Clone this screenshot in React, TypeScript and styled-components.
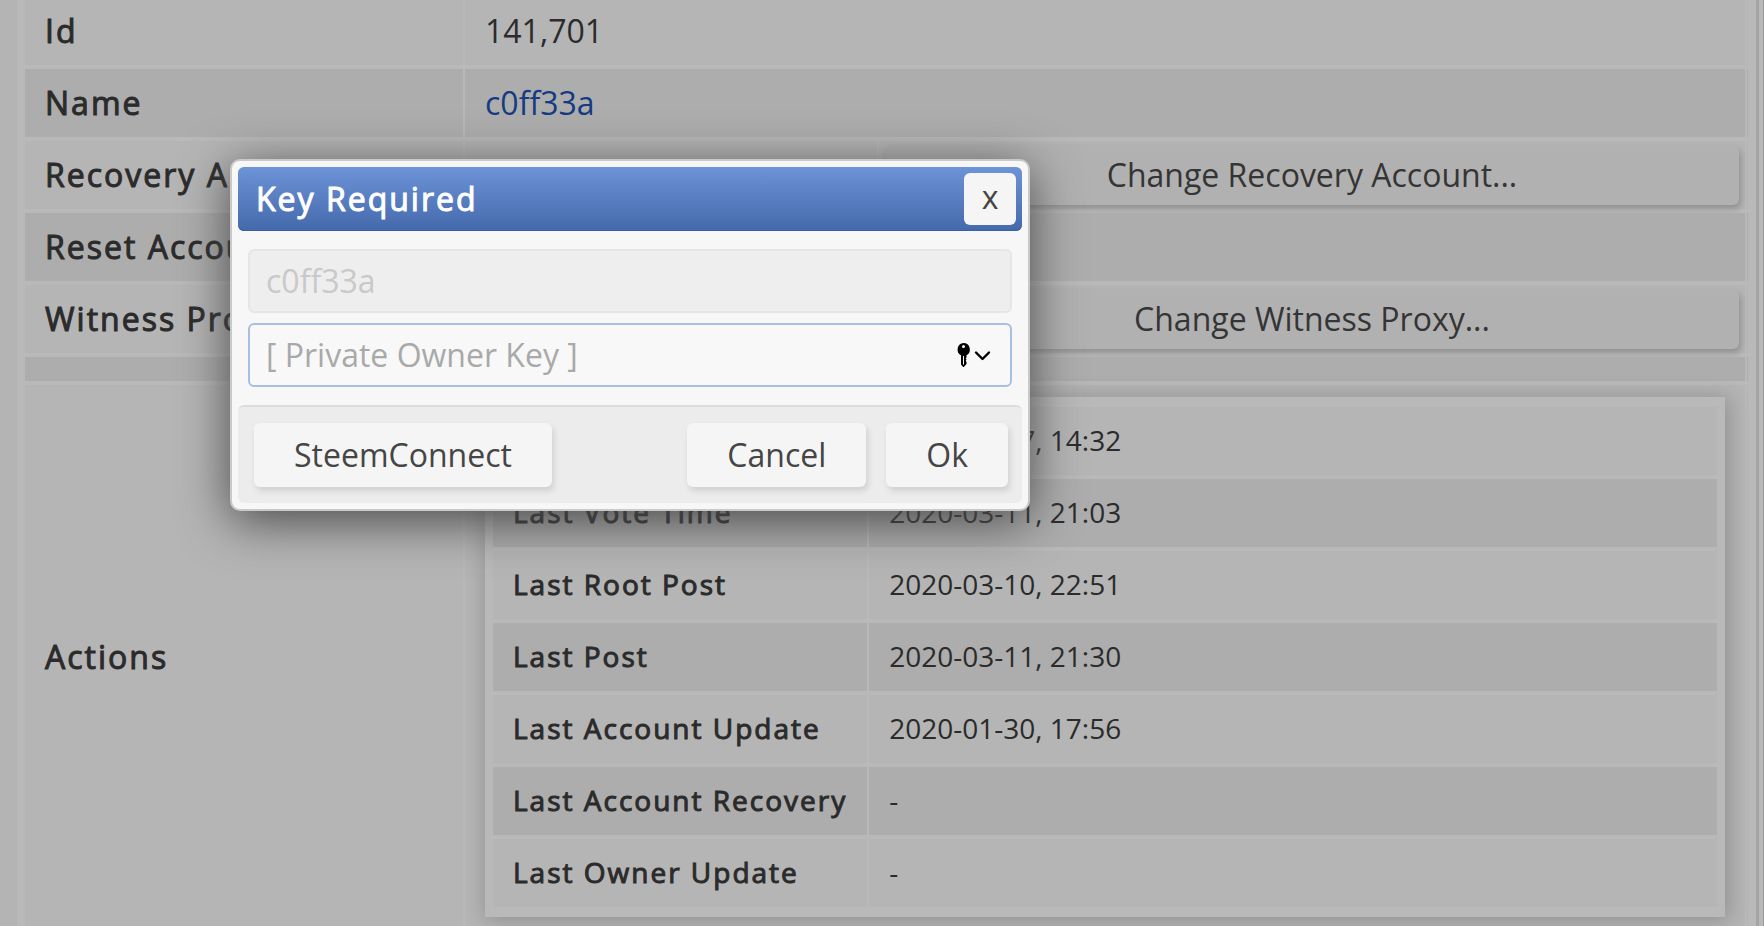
import React, { useState } from "react";
import styled, { createGlobalStyle } from "styled-components";

const GlobalStyle = createGlobalStyle`
  * {
    box-sizing: border-box;
  }
  body {
    margin: 0;
    background: #b4b4b4;
    color: #2b2b2b;
    font-family: "Open Sans", "Noto Sans", sans-serif;
    font-size: 32px;
    line-height: 44px;
  }
  button,
  input {
    font: inherit;
  }
`;

const Page = styled.div`
  display: flex;
  height: 100vh;
  padding-left: 17px;
  overflow: hidden;
`;

const Content = styled.main`
  flex: 1;
  min-width: 0;
  padding: 0 6px;
  background: #b9b9b9;
  border-right: 3px solid #a5a5a5;
`;

const Gutter = styled.div`
  width: 5px;
  background: #b8b8b8;
  border-right: 1px solid #999;
`;

const Table = styled.table`
  width: 100%;
  border-collapse: separate;
  border-spacing: 2px 4px;
`;

const AccountTable = styled(Table)`
  margin-top: -7px;
  table-layout: fixed;
`;

const Row = styled.tr<{ $thin?: boolean }>`
  height: ${(p) => (p.$thin ? 24 : 68)}px;
  background: #b5b5b5;

  &:nth-child(even) {
    background: #adadad;
  }
`;

const Label = styled.th`
  padding: 0 20px;
  font-weight: 400;
  letter-spacing: 2px;
  -webkit-text-stroke: 1px currentColor;
  text-align: left;
  white-space: nowrap;
`;

const ActionLabel = styled(Label)`
  width: 374px;
`;

const Value = styled.td`
  padding: 0 20px;
`;

const Edge = styled.td`
  padding: 0;
`;

const ButtonCell = styled.td`
  padding: 4px 6px;
`;

const CardCell = styled.td`
  padding: 12px 20px;
`;

const Card = styled.div`
  padding: 6px;
  background: #b9b9b9;
  box-shadow: 2px 2px 20px 2px rgba(0, 0, 0, 0.2);
  font-size: 28px;
  line-height: 42px;

  th,
  td {
    padding-bottom: 2px;
  }
`;

const Link = styled.a`
  color: #153b82;
  text-decoration: none;
`;

const RowButton = styled.button`
  display: block;
  width: 100%;
  height: 60px;
  padding: 0;
  border: 0;
  border-radius: 6px;
  background: #b1b1b1;
  color: #353535;
  box-shadow: 2px 4px 6px rgba(0, 0, 0, 0.2);
`;

const Dialog = styled.div`
  position: absolute;
  top: 159px;
  left: 230px;
  width: 800px;
  padding: 6px;
  border: 2px solid #c9c9c9;
  border-radius: 10px;
  background: #f7f7f7;
  box-shadow: 0 10px 50px #484848;
`;

const TitleBar = styled.header`
  display: flex;
  align-items: center;
  justify-content: space-between;
  height: 64px;
  padding: 0 6px 0 18px;
  border-radius: 6px;
  background: linear-gradient(#6d93d8, #4469ab);
  box-shadow: inset 0 -1px #3a5fa5;
`;

const Title = styled.h1`
  margin: 0;
  color: #fff;
  font-size: 32px;
  font-weight: 400;
  letter-spacing: 2px;
  -webkit-text-stroke: 1px currentColor;
`;

const CloseButton = styled.button`
  width: 52px;
  height: 52px;
  padding: 0 0 4px;
  border: 0;
  border-radius: 6px;
  background: #f5f5f5;
  color: #454545;
  font-size: 32px;
`;

const Fields = styled.div`
  display: grid;
  gap: 10px;
  padding: 18px 10px;
`;

const Field = styled.div`
  position: relative;
`;

const TextInput = styled.input`
  display: block;
  width: 100%;
  height: 64px;
  padding: 0 16px 2px;
  border: 2px solid #a5c0e0;
  border-radius: 6px;
  outline: 0;
  background: #f8f8f8;
  color: #454545;

  &::placeholder {
    color: #a9a9a9;
    opacity: 1;
  }
  &:disabled {
    border-color: #e6e6e6;
    background: #eee;
    color: #c9c9c9;
  }
`;

const KeyMenu = styled.button`
  position: absolute;
  top: 18px;
  right: 20px;
  display: flex;
  width: 36px;
  height: 28px;
  padding: 0;
  border: 0;
  background: transparent;
`;

const Footer = styled.footer`
  display: flex;
  gap: 20px;
  padding: 16px 14px 16px 16px;
  border-top: 2px solid #dcdcdc;
  border-radius: 6px;
  background: #ececec;
`;

const DialogButton = styled.button<{ $lead?: boolean }>`
  height: 64px;
  margin-right: ${(p) => (p.$lead ? "auto" : "0")};
  padding: 0 40px;
  border: 0;
  border-radius: 6px;
  background: #f5f5f5;
  color: #454545;
  box-shadow: 2px 4px 6px rgba(0, 0, 0, 0.12);
`;

const actions = [
  ["Last Claim Time", "2020-03-07, 14:32"],
  ["Last Vote Time", "2020-03-11, 21:03"],
  ["Last Root Post", "2020-03-10, 22:51"],
  ["Last Post", "2020-03-11, 21:30"],
  ["Last Account Update", "2020-01-30, 17:56"],
  ["Last Account Recovery", "-"],
  ["Last Owner Update", "-"],
];

function KeyIcon() {
  return (
    <svg width="36" height="28" viewBox="0 0 36 28" aria-hidden="true">
      <path
        fillRule="evenodd"
        d="M7.5 2a6.5 6.5 0 0 1 3 12.200v2.300l-.8 1 .8 1-.8 1.200.8 1.200v2L7.800 26h-.6L5 23.500v-9.300A6.500 6.500 0 0 1 7.500 2zM7.500 4a1.500 1.500 0 1 0 0 3 1.500 1.500 0 0 0 0-3zM7 15v8.500h1V15z"
      />
      <path
        d="M20 11.500l6.500 6.500 6.500-6.500"
        fill="none"
        stroke="#000"
        strokeWidth="2.400"
        strokeLinecap="round"
        strokeLinejoin="round"
      />
    </svg>
  );
}

function KeyDialog() {
  const [key, setKey] = useState("");
  return (
    <Dialog role="dialog" aria-labelledby="key-title">
      <TitleBar>
        <Title id="key-title">Key Required</Title>
        <CloseButton type="button" aria-label="Close">
          x
        </CloseButton>
      </TitleBar>
      <Fields>
        <TextInput aria-label="Account" defaultValue="c0ff33a" disabled />
        <Field>
          <TextInput
            type="password"
            aria-label="Private owner key"
            placeholder="[ Private Owner Key ]"
            value={key}
            onChange={(e) => setKey(e.target.value)}
          />
          <KeyMenu type="button" aria-label="Saved passwords">
            <KeyIcon />
          </KeyMenu>
        </Field>
      </Fields>
      <Footer>
        <DialogButton type="button" $lead>
          SteemConnect
        </DialogButton>
        <DialogButton type="button">Cancel</DialogButton>
        <DialogButton type="button">Ok</DialogButton>
      </Footer>
    </Dialog>
  );
}

const Col = styled.col<{ $width?: number }>`
  width: ${(p) => (p.$width ? `${p.$width}px` : "auto")};
`;

export default function App() {
  return (
    <>
      <GlobalStyle />
      <Page>
        <Content>
          <AccountTable>
            <colgroup>
              <Col $width={438} />
              <Col $width={412} />
              <Col />
              <Col $width={1} />
            </colgroup>
            <tbody>
              <Row>
                <Label scope="row">Id</Label>
                <Value colSpan={2}>141,701</Value>
                <Edge />
              </Row>
              <Row>
                <Label scope="row">Name</Label>
                <Value colSpan={2}>
                  <Link href="#c0ff33a">c0ff33a</Link>
                </Value>
                <Edge />
              </Row>
              <Row>
                <Label scope="row">Recovery Account</Label>
                <Value />
                <ButtonCell>
                  <RowButton type="button">Change Recovery Account...</RowButton>
                </ButtonCell>
                <Edge />
              </Row>
              <Row>
                <Label scope="row">Reset Account</Label>
                <Value colSpan={2} />
                <Edge />
              </Row>
              <Row>
                <Label scope="row">Witness Proxy</Label>
                <Value />
                <ButtonCell>
                  <RowButton type="button">Change Witness Proxy...</RowButton>
                </ButtonCell>
                <Edge />
              </Row>
              <Row $thin>
                <Edge colSpan={3} />
                <Edge />
              </Row>
              <Row>
                <Label scope="row">Actions</Label>
                <CardCell colSpan={2}>
                  <Card>
                    <Table>
                      <tbody>
                        {actions.map(([name, time]) => (
                          <Row key={name}>
                            <ActionLabel scope="row">{name}</ActionLabel>
                            <Value>{time}</Value>
                          </Row>
                        ))}
                      </tbody>
                    </Table>
                  </Card>
                </CardCell>
                <Edge />
              </Row>
            </tbody>
          </AccountTable>
        </Content>
        <Gutter />
      </Page>
      <KeyDialog />
    </>
  );
}
